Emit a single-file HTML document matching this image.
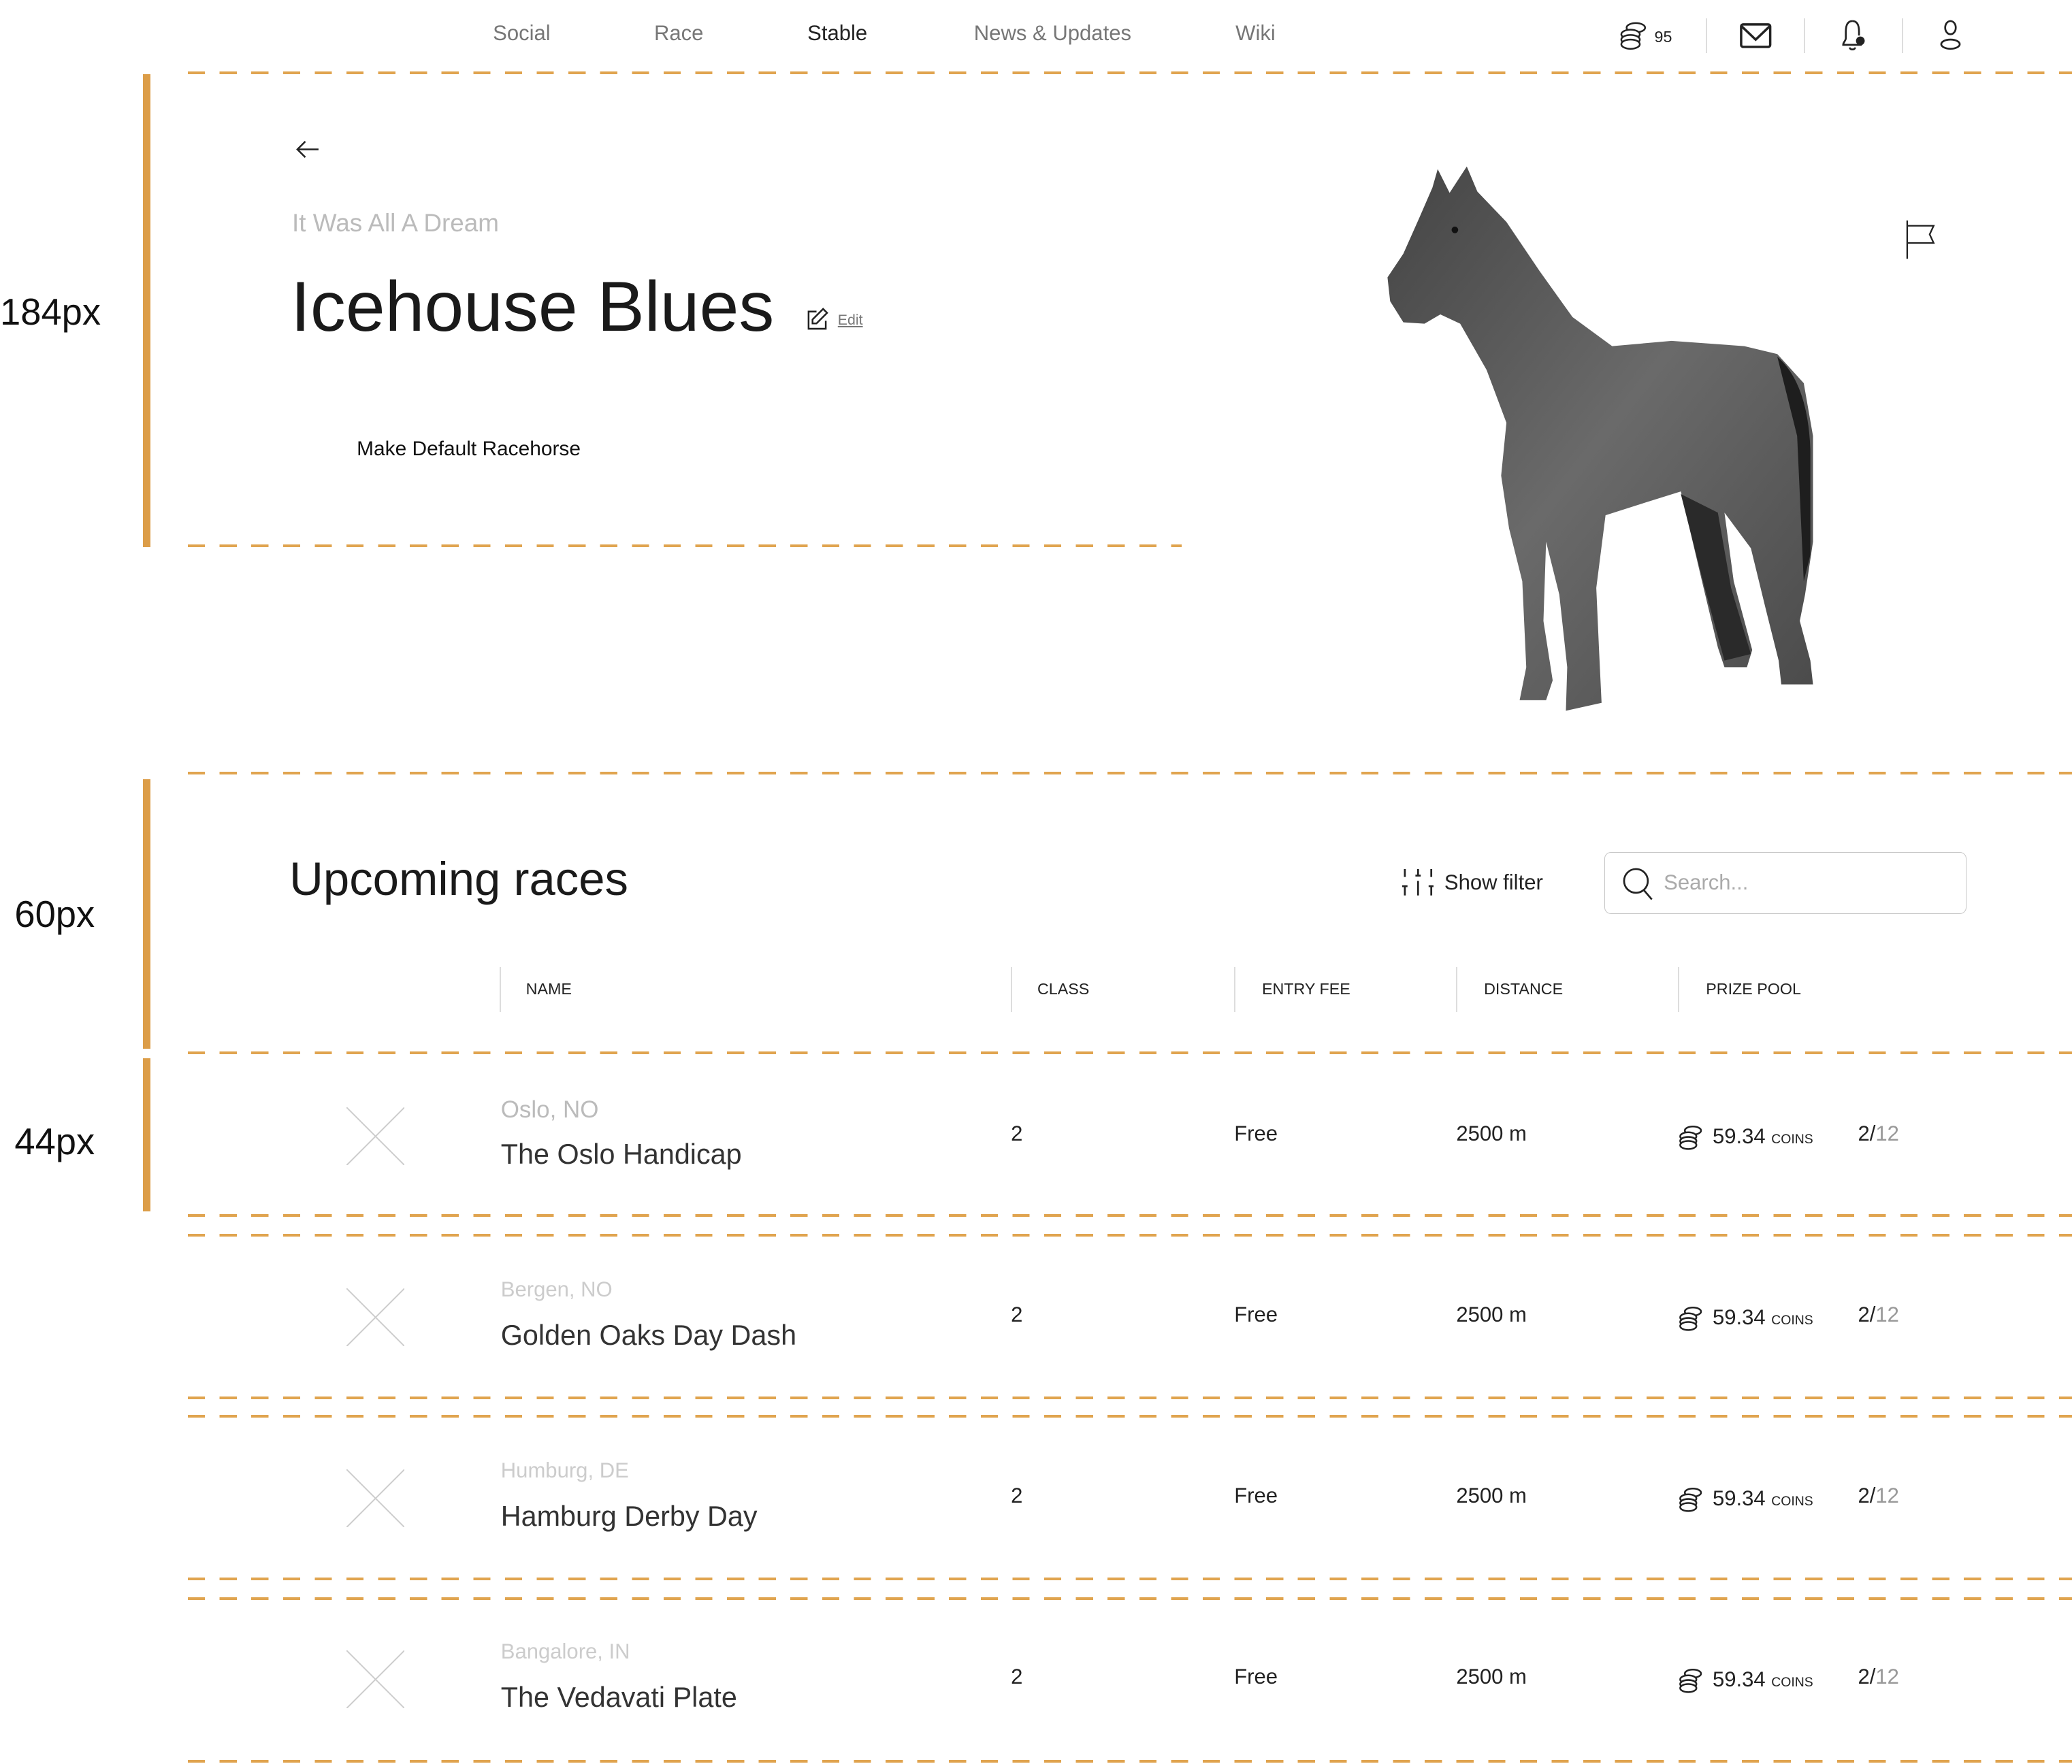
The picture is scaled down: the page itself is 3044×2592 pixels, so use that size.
<!DOCTYPE html>
<html><head><meta charset="utf-8"><style>
html,body{margin:0;padding:0;background:#fff;}
body{zoom:1.94133;width:1568px;height:1335px;position:relative;overflow:hidden;font-family:"Liberation Sans",Arial,sans-serif;color:#222;}
.a{position:absolute;white-space:nowrap;}
.d{position:absolute;height:2px;background:repeating-linear-gradient(90deg,#e0a44f 0 13px,transparent 13px 24px);}
.bar{position:absolute;left:108px;width:6px;background:#dc9d48;}
.nav{top:16px;font-size:16px;color:#777;}
.sep{position:absolute;top:14px;width:1px;height:26px;background:#ddd;}
.th{top:742px;font-size:12px;color:#222;}
.vs{position:absolute;top:732px;width:1px;height:34px;background:#ddd;}
.loc{font-size:18px;color:#bbb;}
.ttl{font-size:21.3px;color:#333;}
.val{font-size:16px;color:#222;}
</style></head><body>
<div class="a nav" style="left:373px">Social</div>
<div class="a nav" style="left:495px">Race</div>
<div class="a nav" style="left:611px;color:#222">Stable</div>
<div class="a nav" style="left:737px">News &amp; Updates</div>
<div class="a nav" style="left:935px">Wiki</div>

<svg class="a" style="left:1225px;top:16px" width="24" height="22" viewBox="0 0 24 22" fill="#fff" stroke="#222" stroke-width="1.3"><ellipse cx="13" cy="5" rx="7" ry="3.5"/><ellipse cx="9" cy="10" rx="7" ry="3.5"/><ellipse cx="9" cy="14" rx="7" ry="3.5"/><ellipse cx="9" cy="17.5" rx="7" ry="3.5"/></svg>
<div class="a" style="left:1252px;top:21px;font-size:12px">95</div>
<div class="sep" style="left:1291px"></div>
<svg class="a" style="left:1316px;top:17px" width="25" height="20" viewBox="0 0 25 20" fill="none" stroke="#222" stroke-width="1.8"><rect x="1.5" y="1.5" width="22" height="17" rx="1.5"/><path d="M2 3l10.5 10L23 3"/></svg>
<div class="sep" style="left:1365px"></div>
<svg class="a" style="left:1392px;top:15px" width="22" height="24" viewBox="0 0 22 24" fill="none" stroke="#222" stroke-width="1.4"><path d="M10 1c-4 0-5 4-5 8v5c0 2-2 3-2 5h14"/><path d="M10 1c4 0 5 4 5 8v3"/><path d="M8 21c0 2 4 2 4 0"/><circle cx="16" cy="16" r="2.6" fill="#222"/></svg>
<div class="sep" style="left:1439px"></div>
<svg class="a" style="left:1467px;top:15px" width="18" height="24" viewBox="0 0 18 24" fill="none" stroke="#222" stroke-width="1.4"><ellipse cx="9" cy="6" rx="4" ry="5"/><ellipse cx="9" cy="18.5" rx="7" ry="3.5"/></svg>

<div class="d" style="left:142px;right:0;top:54px"></div>
<div class="bar" style="top:56px;height:358px"></div>
<div class="a" style="left:0;top:220px;font-size:28px;color:#111">184px</div>

<svg class="a" style="left:223px;top:105px" width="20" height="16" viewBox="0 0 20 16" fill="none" stroke="#222" stroke-width="1.3"><path d="M18 8H2M8 2L2 8l6 6"/></svg>
<div class="a" style="left:221px;top:158px;font-size:19px;color:#bbb">It Was All A Dream</div>
<div class="a" style="left:220px;top:202px;font-size:53.5px;color:#1a1a1a">Icehouse Blues</div>
<svg class="a" style="left:610px;top:233px" width="18" height="18" viewBox="0 0 18 18" fill="none" stroke="#222" stroke-width="1.3"><path d="M8 3H2v13h13v-6"/><path d="M13 1l3 3-8 8H5V9z"/></svg>
<div class="a" style="left:634px;top:236px;font-size:11px;color:#777;text-decoration:underline">Edit</div>
<div class="a" style="left:270px;top:331px;font-size:15.4px;color:#111">Make Default Racehorse</div>
<div class="d" style="left:142px;width:752px;top:412px"></div>

<svg class="a" style="left:0;top:0" width="1568" height="560" viewBox="0 0 1568 560">
<defs><linearGradient id="g" x1="0" y1="0" x2="1" y2="1"><stop offset="0" stop-color="#444"/><stop offset=".5" stop-color="#6a6a6a"/><stop offset="1" stop-color="#4a4a4a"/></linearGradient></defs>
<path fill="url(#g)" d="M1084,142 L1088,128 L1097,146 L1110,126 L1118,145 L1140,168 L1165,205 L1190,240 L1220,262 L1265,258 L1320,262 L1345,268 L1365,290 L1372,330 L1372,410 L1366,450 L1362,470 L1370,500 L1372,518 L1348,518 L1346,500 L1336,460 L1325,415 L1305,388 L1312,440 L1326,492 L1322,505 L1305,505 L1300,490 L1288,440 L1272,372 L1240,382 L1215,390 L1208,445 L1210,490 L1212,532 L1185,538 L1186,505 L1180,450 L1170,410 L1168,470 L1175,515 L1170,530 L1150,530 L1155,505 L1152,440 L1142,400 L1136,360 L1140,320 L1125,280 L1105,245 L1090,238 L1078,245 L1062,244 L1052,228 L1050,210 L1062,192 L1074,165 Z"/>
<path d="M1345,270 Q1368,290 1370,340 L1370,420 L1365,440 L1360,330 Z" fill="#1e1e1e"/>
<path d="M1272,374 L1300,388 L1310,445 L1325,495 L1305,500 L1290,445Z" fill="#2a2a2a"/>
<circle cx="1101" cy="174" r="2.5" fill="#111"/>
</svg>
<svg class="a" style="left:1442px;top:167px" width="24" height="30" viewBox="0 0 24 30" fill="none" stroke="#222" stroke-width="1.2"><path d="M1.5 0v29M1.5 4h20l-3 6.5 3 6.5h-20"/></svg>

<div class="d" style="left:142px;right:0;top:584px"></div>
<div class="bar" style="top:590px;height:204px"></div>
<div class="a" style="left:11px;top:676px;font-size:28px;color:#111">60px</div>
<div class="bar" style="top:801px;height:116px"></div>
<div class="a" style="left:11px;top:848px;font-size:28px;color:#111">44px</div>

<div class="a" style="left:219px;top:645px;font-size:35.5px;color:#1a1a1a">Upcoming races</div>
<svg class="a" style="left:1061px;top:657px" width="24" height="22" viewBox="0 0 24 22" fill="none" stroke="#222" stroke-width="1.4"><path d="M2 1v6M12 1v5M22 1v6M2 14v7M12 10v11M22 14v7M0 14h4M10 6h4M20 14h4"/></svg>
<div class="a" style="left:1093px;top:659px;font-size:16px">Show filter</div>
<div class="a" style="left:1214px;top:645px;width:274px;height:47px;border:1px solid #c6c6c6;border-radius:5px;box-sizing:border-box"></div>
<svg class="a" style="left:1228px;top:657px" width="24" height="25" viewBox="0 0 24 25" fill="none" stroke="#222" stroke-width="1.4"><circle cx="10" cy="10" r="9"/><path d="M16 17l6 7"/></svg>
<div class="a" style="left:1259px;top:659px;font-size:16px;color:#aaa">Search...</div>

<div class="vs" style="left:378px"></div><div class="vs" style="left:765px"></div><div class="vs" style="left:934px"></div><div class="vs" style="left:1102px"></div><div class="vs" style="left:1270px"></div>
<div class="a th" style="left:398px">NAME</div>
<div class="a th" style="left:785px">CLASS</div>
<div class="a th" style="left:955px">ENTRY FEE</div>
<div class="a th" style="left:1123px">DISTANCE</div>
<div class="a th" style="left:1291px">PRIZE POOL</div>
<div class="d" style="left:142px;right:0;top:796px"></div>

<div class="d" style="left:142px;right:0;top:919px"></div>
<div class="d" style="left:142px;right:0;top:934px"></div>
<div class="d" style="left:142px;right:0;top:1057px"></div>
<div class="d" style="left:142px;right:0;top:1071px"></div>
<div class="d" style="left:142px;right:0;top:1194px"></div>
<div class="d" style="left:142px;right:0;top:1209px"></div>
<div class="d" style="left:142px;right:0;top:1332px"></div>

<div style="position:absolute;left:0;top:0">
<svg class="a" style="left:262px;top:838px" width="44" height="44"><path d="M0 0L44 44M44 0L0 44" stroke="#ccc" stroke-width="1"/></svg>
<div class="a loc" style="left:379px;top:830px">Oslo, NO</div>
<div class="a ttl" style="left:379px;top:862px">The Oslo Handicap</div>
</div>
<div style="position:absolute;left:0;top:137px">
<svg class="a" style="left:262px;top:838px" width="44" height="44"><path d="M0 0L44 44M44 0L0 44" stroke="#ccc" stroke-width="1"/></svg>
<div class="a loc" style="left:379px;top:830px;font-size:16px;color:#ccc">Bergen, NO</div>
<div class="a ttl" style="left:379px;top:862px">Golden Oaks Day Dash</div>
</div>
<div style="position:absolute;left:0;top:274px">
<svg class="a" style="left:262px;top:838px" width="44" height="44"><path d="M0 0L44 44M44 0L0 44" stroke="#ccc" stroke-width="1"/></svg>
<div class="a loc" style="left:379px;top:830px;font-size:16px;color:#ccc">Humburg, DE</div>
<div class="a ttl" style="left:379px;top:862px">Hamburg Derby Day</div>
</div>
<div style="position:absolute;left:0;top:411px">
<svg class="a" style="left:262px;top:838px" width="44" height="44"><path d="M0 0L44 44M44 0L0 44" stroke="#ccc" stroke-width="1"/></svg>
<div class="a loc" style="left:379px;top:830px;font-size:16px;color:#ccc">Bangalore, IN</div>
<div class="a ttl" style="left:379px;top:862px">The Vedavati Plate</div>
</div>

<div style="position:absolute;left:0;top:0"><div class="a val" style="left:765px;top:849px">2</div><div class="a val" style="left:934px;top:849px">Free</div><div class="a val" style="left:1102px;top:849px">2500 m</div><svg class="a" style="left:1270px;top:851px" width="21" height="20" viewBox="0 0 24 22" fill="#fff" stroke="#222" stroke-width="1.5"><ellipse cx="13" cy="5" rx="7" ry="3.5"/><ellipse cx="9" cy="10" rx="7" ry="3.5"/><ellipse cx="9" cy="14" rx="7" ry="3.5"/><ellipse cx="9" cy="17.5" rx="7" ry="3.5"/></svg><div class="a val" style="left:1296px;top:851px">59.34 <span style="font-size:10px">COINS</span></div><div class="a val" style="left:1406px;top:849px">2/<span style="color:#999">12</span></div></div>
<div style="position:absolute;left:0;top:137px"><div class="a val" style="left:765px;top:849px">2</div><div class="a val" style="left:934px;top:849px">Free</div><div class="a val" style="left:1102px;top:849px">2500 m</div><svg class="a" style="left:1270px;top:851px" width="21" height="20" viewBox="0 0 24 22" fill="#fff" stroke="#222" stroke-width="1.5"><ellipse cx="13" cy="5" rx="7" ry="3.5"/><ellipse cx="9" cy="10" rx="7" ry="3.5"/><ellipse cx="9" cy="14" rx="7" ry="3.5"/><ellipse cx="9" cy="17.5" rx="7" ry="3.5"/></svg><div class="a val" style="left:1296px;top:851px">59.34 <span style="font-size:10px">COINS</span></div><div class="a val" style="left:1406px;top:849px">2/<span style="color:#999">12</span></div></div>
<div style="position:absolute;left:0;top:274px"><div class="a val" style="left:765px;top:849px">2</div><div class="a val" style="left:934px;top:849px">Free</div><div class="a val" style="left:1102px;top:849px">2500 m</div><svg class="a" style="left:1270px;top:851px" width="21" height="20" viewBox="0 0 24 22" fill="#fff" stroke="#222" stroke-width="1.5"><ellipse cx="13" cy="5" rx="7" ry="3.5"/><ellipse cx="9" cy="10" rx="7" ry="3.5"/><ellipse cx="9" cy="14" rx="7" ry="3.5"/><ellipse cx="9" cy="17.5" rx="7" ry="3.5"/></svg><div class="a val" style="left:1296px;top:851px">59.34 <span style="font-size:10px">COINS</span></div><div class="a val" style="left:1406px;top:849px">2/<span style="color:#999">12</span></div></div>
<div style="position:absolute;left:0;top:411px"><div class="a val" style="left:765px;top:849px">2</div><div class="a val" style="left:934px;top:849px">Free</div><div class="a val" style="left:1102px;top:849px">2500 m</div><svg class="a" style="left:1270px;top:851px" width="21" height="20" viewBox="0 0 24 22" fill="#fff" stroke="#222" stroke-width="1.5"><ellipse cx="13" cy="5" rx="7" ry="3.5"/><ellipse cx="9" cy="10" rx="7" ry="3.5"/><ellipse cx="9" cy="14" rx="7" ry="3.5"/><ellipse cx="9" cy="17.5" rx="7" ry="3.5"/></svg><div class="a val" style="left:1296px;top:851px">59.34 <span style="font-size:10px">COINS</span></div><div class="a val" style="left:1406px;top:849px">2/<span style="color:#999">12</span></div></div>
</body></html>
